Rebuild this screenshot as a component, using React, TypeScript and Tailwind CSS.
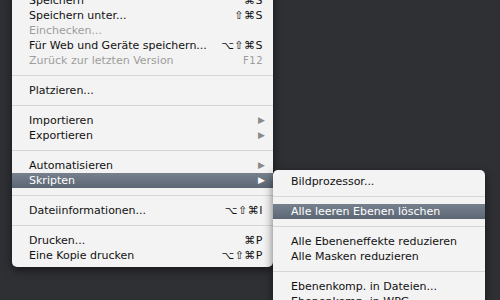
type Item =
  | { kind: "sep" }
  | {
      kind: "item";
      label: string;
      shortcut?: string;
      disabled?: boolean;
      submenu?: boolean;
      active?: boolean;
      small?: boolean;
    };

const mainItems: Item[] = [
  { kind: "item", label: "Speichern", shortcut: "⌘S" },
  { kind: "item", label: "Speichern unter...", shortcut: "⇧⌘S" },
  { kind: "item", label: "Einchecken...", disabled: true },
  { kind: "item", label: "Für Web und Geräte speichern...", shortcut: "⌥⇧⌘S" },
  { kind: "item", label: "Zurück zur letzten Version", shortcut: "F12", disabled: true, small: true },
  { kind: "sep" },
  { kind: "item", label: "Platzieren..." },
  { kind: "sep" },
  { kind: "item", label: "Importieren", submenu: true },
  { kind: "item", label: "Exportieren", submenu: true },
  { kind: "sep" },
  { kind: "item", label: "Automatisieren", submenu: true },
  { kind: "item", label: "Skripten", submenu: true, active: true },
  { kind: "sep" },
  { kind: "item", label: "Dateiinformationen...", shortcut: "⌥⇧⌘I" },
  { kind: "sep" },
  { kind: "item", label: "Drucken...", shortcut: "⌘P" },
  { kind: "item", label: "Eine Kopie drucken", shortcut: "⌥⇧⌘P" },
];

const subItems: Item[] = [
  { kind: "item", label: "Bildprozessor..." },
  { kind: "sep" },
  { kind: "item", label: "Alle leeren Ebenen löschen", active: true },
  { kind: "sep" },
  { kind: "item", label: "Alle Ebeneneffekte reduzieren" },
  { kind: "item", label: "Alle Masken reduzieren" },
  { kind: "sep" },
  { kind: "item", label: "Ebenenkomp. in Dateien..." },
  { kind: "item", label: "Ebenenkomp. in WPG..." },
];

function Row({ item, padLeft }: { item: Item; padLeft: string }) {
  if (item.kind === "sep") {
    return (
      <div className="h-[15px] flex flex-col justify-center">
        <div className="h-px bg-[#d6d6d6]" />
      </div>
    );
  }
  const color = item.active
    ? "text-white bg-gradient-to-b from-[#77818e] to-[#5c6674]"
    : item.disabled
      ? "text-[#9d9d9d]"
      : "text-[#111111]";
  return (
    <div className={`h-[15px] flex items-center justify-between ${padLeft} pr-[10px] ${color}`}>
      <span className="whitespace-nowrap">{item.label}</span>
      {item.shortcut && (
        <span className={`whitespace-nowrap tracking-[0.5px] ${item.small ? "text-[10px]" : ""}`}>
          {item.shortcut}
        </span>
      )}
      {item.submenu && (
        <span className={`text-[9px] mr-[-2px] ${item.active ? "text-white" : "text-[#8a8a8a]"}`}>▶</span>
      )}
    </div>
  );
}

export default function App() {
  return (
    <div
      className="h-[300px] w-[500px] overflow-hidden bg-[#2f3034] text-[11px] leading-none"
      style={{ fontFamily: '"DejaVu Sans", sans-serif' }}
    >
      <div className="flex items-start pl-[12px]">
        <div className="w-[261px] -mt-[7px] pb-[4px] bg-[#f3f3f3] rounded-b-[5px] shadow-[0_3px_10px_rgba(0,0,0,0.55)]">
          {mainItems.map((item, i) => (
            <Row key={i} item={item} padLeft="pl-[17px]" />
          ))}
        </div>
        <div className="w-[212px] mt-[170px] pt-[4px] pb-[4px] bg-[#f3f3f3] rounded-t-[5px] shadow-[0_3px_10px_rgba(0,0,0,0.55)]">
          {subItems.map((item, i) => (
            <Row key={i} item={item} padLeft="pl-[18px]" />
          ))}
        </div>
      </div>
    </div>
  );
}
